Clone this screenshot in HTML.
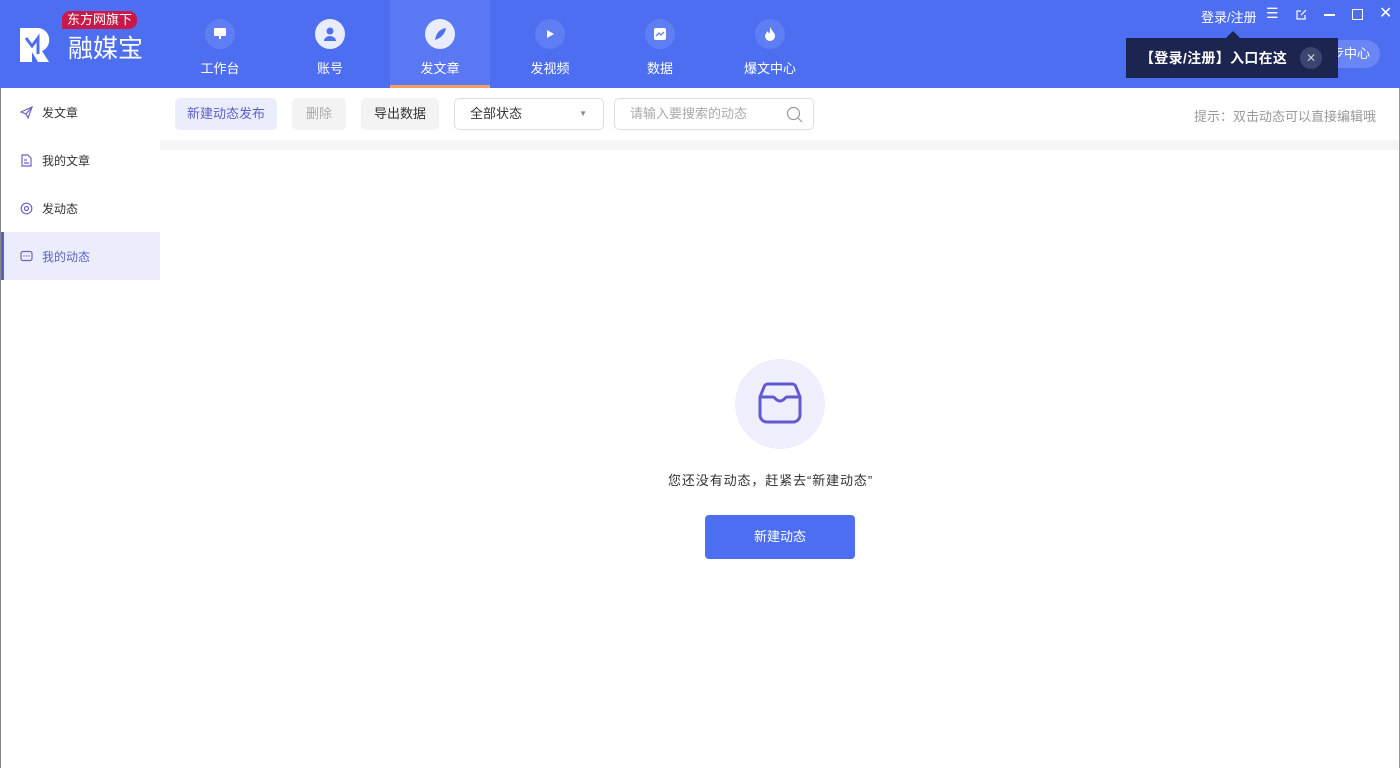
<!DOCTYPE html>
<html><head><meta charset="utf-8"><style>
*{margin:0;padding:0;box-sizing:border-box}
body{width:1400px;height:768px;overflow:hidden;background:#fff;font-family:"Liberation Sans","Noto Sans CJK SC",sans-serif;position:relative;font-size:13px;color:#333}
.hdr{position:absolute;left:0;top:0;width:1400px;height:88px;background:#4e6ef2}
.abs{position:absolute}
.nav{position:absolute;top:0;width:100px;height:88px;text-align:center;color:#fff;font-size:13px}
.nav .ic{width:30px;height:30px;border-radius:50%;margin:19px auto 0;background:#5f7ef4;display:flex;align-items:center;justify-content:center}
.nav .ic.w{background:#e8ecfd}
.nav span{display:block;margin-top:9px}
.side{position:absolute;left:0;top:88px;width:160px;height:680px;border-left:1px solid #888;background:#fff}
.si{height:48px;display:flex;align-items:center;padding-left:19px;font-size:12px;color:#333}
.si svg{margin-right:9px}
.si.on{background:#ecedfc;color:#5b62c4;border-left:3px solid #5b62c4;padding-left:16px}
.btn{position:absolute;top:98px;height:32px;line-height:32px;border-radius:5px;font-size:13px;text-align:center}
</style></head><body>
<div class="hdr">
 <svg class="abs" style="left:20px;top:28px" width="38" height="34" viewBox="0 0 38 34"><path d="M0 0h18a12 12 0 0 1 4 23l7 11H18l-6-10v10H0z" fill="#fff"/><path d="M6 10l6 8 6-8v16" fill="none" stroke="#4e6ef2" stroke-width="3"/></svg>
 <div class="abs" style="left:62px;top:11px;background:#c8194a;color:#fff;font-size:13px;padding:0 5px;border-radius:8px 8px 8px 0;line-height:18px">东方网旗下</div>
 <div class="abs" style="left:68px;top:29px;color:#fff;font-size:25px;letter-spacing:0px">融媒宝</div>
 <div class="nav" style="left:170px"><div class="ic"><svg width="14" height="14" viewBox="0 0 14 14"><rect x="1" y="1" width="12" height="8" rx="1" fill="#fff"/><rect x="6" y="9" width="2" height="3" fill="#fff"/></svg></div><span>工作台</span></div>
 <div class="nav" style="left:280px"><div class="ic w"><svg width="16" height="16" viewBox="0 0 16 16"><circle cx="8" cy="5" r="3.5" fill="#4e6ef2"/><path d="M2 15a6 5 0 0 1 12 0z" fill="#4e6ef2"/></svg></div><span>账号</span></div>
 <div class="nav" style="left:390px;background:#5a78f3"><div class="ic w"><svg width="16" height="16" viewBox="0 0 16 16"><path d="M3 14C4 7 8 3 14 2C13 8 9 12 3 14z" fill="#4e6ef2"/></svg></div><span>发文章</span><div class="abs" style="left:0;bottom:0;width:100px;height:3px;background:#f0a060"></div></div>
 <div class="nav" style="left:500px"><div class="ic"><svg width="12" height="12"><path d="M3 2l7 4-7 4z" fill="#fff"/></svg></div><span>发视频</span></div>
 <div class="nav" style="left:610px"><div class="ic"><svg width="14" height="14"><rect x="1" y="1" width="12" height="12" rx="2" fill="#fff"/><path d="M3 9l3-3 2 2 3-3" stroke="#5f7ef4" fill="none" stroke-width="1.3"/></svg></div><span>数据</span></div>
 <div class="nav" style="left:720px"><div class="ic"><svg width="12" height="14"><path d="M6 0C8 4 11 6 11 9a5 5 0 0 1-10 0c0-2 2-3 2-5 1 1 2 2 2 3 1-2 1-4 1-7z" fill="#fff"/></svg></div><span>爆文中心</span></div>
 <div class="abs" style="left:1201px;top:7px;color:#fff;font-size:13px">登录/注册</div>
 <div class="abs" style="left:1266px;top:5px;color:#fff;font-size:14px">☰</div>
 <svg class="abs" style="left:1295px;top:9px" width="12" height="12"><path d="M10 6v4H2V2h4M6 6l5-5" stroke="#fff" fill="none" stroke-width="1.2"/></svg>
 <div class="abs" style="left:1324px;top:14px;width:11px;height:1.5px;background:#fff"></div>
 <div class="abs" style="left:1352px;top:9px;width:11px;height:11px;border:1.5px solid #fff"></div>
 <div class="abs" style="left:1379px;top:3px;color:#fff;font-size:16px">✕</div>
 <div class="abs" style="left:1296px;top:40px;width:84px;height:28px;border-radius:14px;background:#6a86f4;color:#fff;font-size:13px;line-height:28px;padding-left:22px">同步中心</div>
 <div class="abs" style="left:1126px;top:38px;width:212px;height:40px;background:#1b2550;color:#fff;font-weight:bold;font-size:14px;line-height:40px;padding-left:14px;letter-spacing:0.3px">【登录/注册】入口在这</div>
 <div class="abs" style="left:1226px;top:31px;width:0;height:0;border:7px solid transparent;border-bottom-color:#1b2550;border-top:0"></div>
 <div class="abs" style="left:1300px;top:47px;width:22px;height:22px;border-radius:50%;background:#3a4670;color:#ccc;text-align:center;line-height:22px;font-size:12px">✕</div>
</div>
<div class="side">
 <div class="si"><svg width="13" height="13" viewBox="0 0 13 13"><path d="M1 6l11-5-4 11-2-4z M6 8l6-7" fill="none" stroke="#6b64c4" stroke-width="1.2"/></svg>发文章</div>
 <div class="si"><svg width="13" height="13"><path d="M2 1h6l3 3v8H2z M4 6h3M4 9h5" fill="none" stroke="#6b64c4" stroke-width="1.2"/></svg>我的文章</div>
 <div class="si"><svg width="13" height="13"><circle cx="6.5" cy="6.5" r="5.3" fill="none" stroke="#6b64c4" stroke-width="1.2"/><circle cx="6.5" cy="6.5" r="2" fill="none" stroke="#6b64c4" stroke-width="1.2"/></svg>发动态</div>
 <div class="si on"><svg width="13" height="13"><rect x="1" y="1.5" width="11" height="9" rx="2" fill="none" stroke="#6b64c4" stroke-width="1.2"/><circle cx="4" cy="6" r=".7" fill="#6b64c4"/><circle cx="6.5" cy="6" r=".7" fill="#6b64c4"/><circle cx="9" cy="6" r=".7" fill="#6b64c4"/></svg>我的动态</div>
</div>
<div class="btn" style="left:175px;width:102px;background:#ecedfc;color:#5b62c4">新建动态发布</div>
<div class="btn" style="left:292px;width:54px;background:#f3f3f3;color:#aaa">删除</div>
<div class="btn" style="left:361px;width:78px;background:#f3f3f3;color:#333">导出数据</div>
<div class="btn" style="left:454px;width:150px;border:1px solid #ddd;text-align:left;padding-left:15px;color:#333;line-height:30px">全部状态<span style="position:absolute;right:16px;font-size:8px;color:#888">▼</span></div>
<div class="btn" style="left:614px;width:200px;border:1px solid #ddd;text-align:left;padding-left:15px;color:#aaa;line-height:30px">请输入要搜索的动态<svg style="position:absolute;right:10px;top:7px" width="17" height="17"><circle cx="7.5" cy="7.5" r="6" fill="none" stroke="#999" stroke-width="1.2"/><path d="M12 12l4 4" stroke="#999" stroke-width="1.2"/></svg></div>
<div class="abs" style="left:1194px;top:106px;color:#999;font-size:13px">提示：双击动态可以直接编辑哦</div>
<div class="abs" style="left:160px;top:140px;width:1240px;height:10px;background:#f5f5f7"></div>
<div class="abs" style="left:1399px;top:88px;width:1px;height:680px;background:#999"></div>
<div class="abs" style="left:735px;top:359px;width:90px;height:90px;border-radius:50%;background:#efeefc"></div>
<svg class="abs" style="left:756px;top:382px" width="48" height="44" viewBox="0 0 48 44"><path d="M8 5a4 4 0 0 1 4-3h24a4 4 0 0 1 4 3l4 10v18a7 7 0 0 1-7 7H11a7 7 0 0 1-7-7V15z M4 15h13c2 0 3 4 7 4s5-4 7-4h13" fill="none" stroke="#6259d2" stroke-width="3" stroke-linejoin="round"/></svg>
<div class="abs" style="left:668px;top:470px;font-size:13px;color:#333;letter-spacing:0.9px">您还没有动态，赶紧去“新建动态”</div>
<div class="abs" style="left:705px;top:515px;width:150px;height:44px;border-radius:4px;background:#4e6ef2;color:#fff;text-align:center;line-height:44px;font-size:13px">新建动态</div>
</body></html>
